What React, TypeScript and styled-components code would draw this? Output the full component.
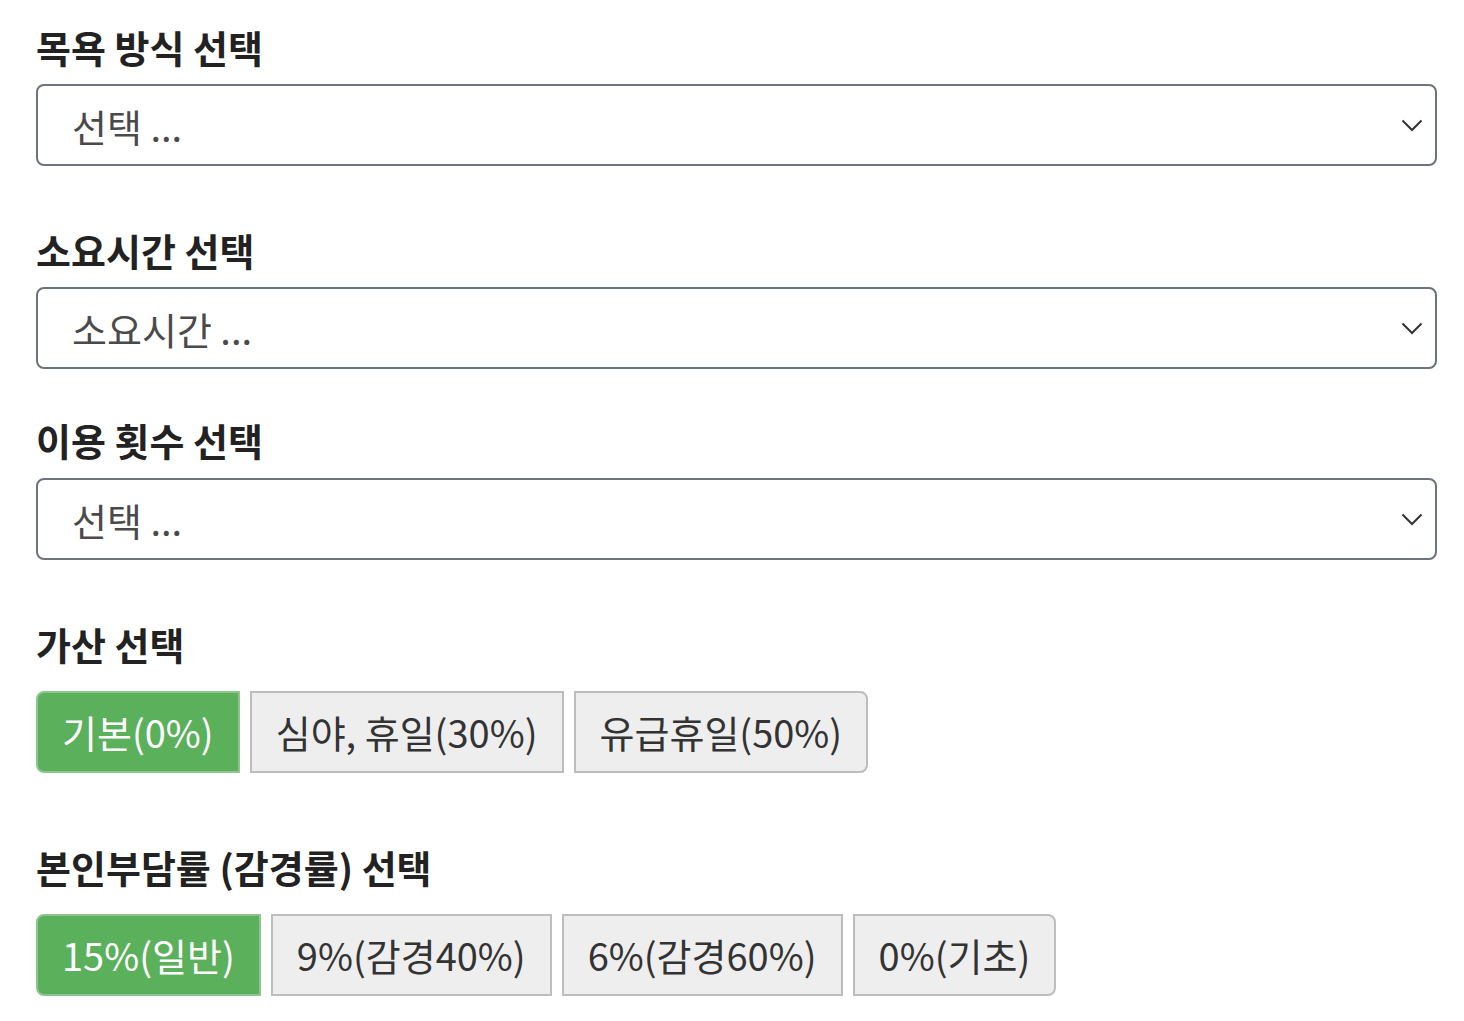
import React, { useState } from "react";
import styled, { createGlobalStyle } from "styled-components";

const Global = createGlobalStyle`
  html, body { margin: 0; padding: 0; background: #fff; }
  body { font-family: "Noto Sans CJK KR", "Noto Sans", sans-serif; color: #222; }
`;

const Page = styled.div`
  width: 1401px;
  padding: 26px 0 0 36px;
`;

const Section = styled.section<{ $top: number }>`
  margin-top: ${(p) => p.$top}px;
`;

const Label = styled.h2<{ $gap: number }>`
  margin: 0 0 ${(p) => p.$gap}px 0;
  font-size: 38px;
  line-height: 42px;
  font-weight: 700;
  color: #222;
  letter-spacing: 0;
`;

const SelectWrap = styled.div`
  position: relative;
  height: 82px;
`;

const Select = styled.select`
  appearance: none;
  -webkit-appearance: none;
  box-sizing: border-box;
  width: 100%;
  height: 82px;
  border: 2px solid #6c737b;
  border-radius: 8px;
  background: #fff;
  padding: 0 80px 0 34px;
  font-family: "Noto Sans CJK KR", "Noto Sans", sans-serif;
  font-size: 38px;
  color: #4a4a4a;
  outline: none;
`;

const Chevron = styled.svg`
  position: absolute;
  right: 14px;
  top: 35px;
  width: 22px;
  height: 13px;
  pointer-events: none;
`;

const Group = styled.div`
  display: flex;
  gap: 10px;
`;

const Btn = styled.button<{ $active: boolean; $first: boolean; $last: boolean }>`
  box-sizing: border-box;
  height: 82px;
  padding: 0 24px;
  font-family: "Noto Sans CJK KR", "Noto Sans", sans-serif;
  font-size: 38px;
  font-weight: 400;
  line-height: 1;
  color: ${(p) => (p.$active ? "#fff" : "#333")};
  background: ${(p) => (p.$active ? "#5bb05b" : "#eeeeee")};
  border: 2px solid ${(p) => (p.$active ? "#8fc48f" : "#bdbdbd")};
  border-radius: ${(p) =>
    p.$first ? "8px 0 0 8px" : p.$last ? "0 8px 8px 0" : "0"};
  cursor: pointer;
`;

function Dropdown({ placeholder }: { placeholder: string }) {
  return (
    <SelectWrap>
      <Select defaultValue="">
        <option value="">{placeholder}</option>
      </Select>
      <Chevron viewBox="0 0 22 13">
        <path d="M1.5 1.5 L11 11 L20.5 1.5" fill="none" stroke="#333" strokeWidth="2" />
      </Chevron>
    </SelectWrap>
  );
}

function Toggle({ items, initial }: { items: string[]; initial: number }) {
  const [sel, setSel] = useState(initial);
  return (
    <Group>
      {items.map((t, i) => (
        <Btn
          key={t}
          $active={sel === i}
          $first={i === 0}
          $last={i === items.length - 1}
          onClick={() => setSel(i)}
        >
          {t}
        </Btn>
      ))}
    </Group>
  );
}

export default function App() {
  return (
    <Page>
      <Global />
      <Section $top={0}>
        <Label $gap={16}>목욕 방식 선택</Label>
        <Dropdown placeholder="선택 ..." />
      </Section>
      <Section $top={63}>
        <Label $gap={16}>소요시간 선택</Label>
        <Dropdown placeholder="소요시간 ..." />
      </Section>
      <Section $top={50}>
        <Label $gap={17}>이용 횟수 선택</Label>
        <Dropdown placeholder="선택 ..." />
      </Section>
      <Section $top={63}>
        <Label $gap={26}>가산 선택</Label>
        <Toggle items={["기본(0%)", "심야, 휴일(30%)", "유급휴일(50%)"]} initial={0} />
      </Section>
      <Section $top={73}>
        <Label $gap={26}>본인부담률 (감경률) 선택</Label>
        <Toggle items={["15%(일반)", "9%(감경40%)", "6%(감경60%)", "0%(기초)"]} initial={0} />
      </Section>
    </Page>
  );
}
